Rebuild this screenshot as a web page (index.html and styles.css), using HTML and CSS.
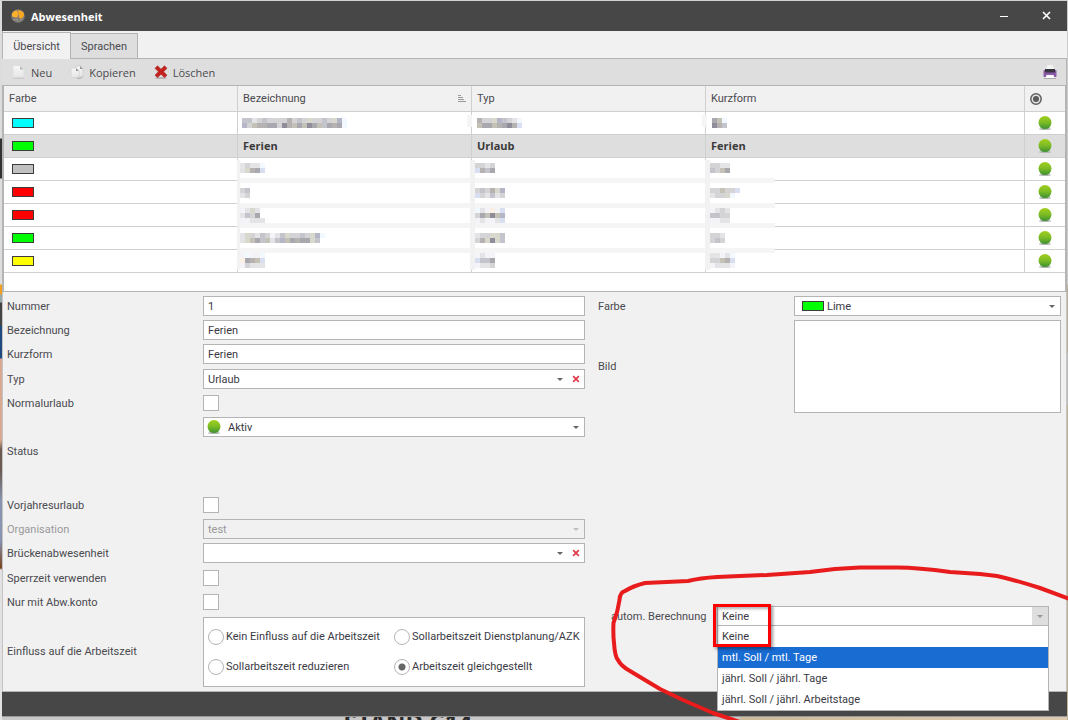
FILE: index.html
```html
<!DOCTYPE html>
<html lang="de">
<head>
  <meta charset="UTF-8">
  <meta name="viewport" content="width=device-width, initial-scale=1.0">
  <title>Abwesenheit</title>
  <link rel="stylesheet" href="styles.css">
</head>
<body>
  <div class="desktop-text">STAND C14</div>

  <!-- shared icons -->
  <svg class="defs" width="0" height="0" aria-hidden="true">
    <defs>
      <linearGradient id="green" x1="0" y1="0" x2="0" y2="1">
        <stop offset="0" stop-color="#a0cf1c"/>
        <stop offset="0.5" stop-color="#7cbb25"/>
        <stop offset="1" stop-color="#3c9033"/>
      </linearGradient>
      <linearGradient id="paper" x1="0" y1="0" x2="0" y2="1">
        <stop offset="0" stop-color="#f6f6f6"/>
        <stop offset="1" stop-color="#e6e6e6"/>
      </linearGradient>
      <symbol id="dot" viewBox="0 0 14 14">
        <ellipse cx="7" cy="13" rx="6" ry="1" fill="#b4b4b4"/>
        <circle cx="7" cy="6.6" r="6.5" fill="url(#green)"/>
      </symbol>
      <symbol id="clear" viewBox="0 0 7 7">
        <path d="M1 1l5 5M6 1L1 6" stroke="#e03a48" stroke-width="1.5"/>
      </symbol>
    </defs>
  </svg>

  <div class="window">
    <header class="titlebar">
      <svg class="logo" width="14" height="14" viewBox="0 0 14 14" aria-hidden="true">
        <circle cx="7" cy="7" r="6.8" fill="#7d7a76"/>
        <path d="M.8 4.500Q3 1.500 6 1.300L7 4.500 6.500 8.500 3.500 8.300 1.200 7.500Z" fill="#fdb12b"/>
        <path d="M7 1.300Q11 1 12.800 4L13 7 10.500 9.800 8 8.800 7.400 5Z" fill="#f5a623"/>
        <path d="M2.500 10.500h4l.5 2.500M9 10.500l2 .5" stroke="#9a9793" fill="none"/>
      </svg>
      <h1>Abwesenheit</h1>
      <button class="win-btn" type="button" aria-label="Minimieren">
        <svg width="8" height="9" viewBox="0 0 8 9"><path d="M0 5.5h8" stroke="#fff"/></svg>
      </button>
      <button class="win-btn" type="button" aria-label="Schließen">
        <svg width="9" height="9" viewBox="0 0 9 9"><path d="M1 1l7 7M8 1L1 8" stroke="#fff" stroke-width="1.6"/></svg>
      </button>
    </header>

    <nav class="tabs">
      <button class="tab active" type="button">Übersicht</button>
      <button class="tab" type="button">Sprachen</button>
    </nav>

    <div class="toolbar">
      <button class="tool" type="button">
        <svg width="14" height="14" viewBox="0 0 14 14">
          <ellipse cx="6.5" cy="13" rx="6" ry="1" fill="#c9c9c9"/>
          <path d="M1.500 1h6.500l3.500 3.500v8h-10z" fill="url(#paper)"/>
          <path d="M8 1v3.500h3.500z" fill="#b9b9b9"/>
        </svg>
        Neu
      </button>
      <button class="tool" type="button">
        <svg width="14" height="14" viewBox="0 0 14 14">
          <path d="M6 1h4l3 3v7.500H6z" fill="url(#paper)" stroke="#c4c4c4" stroke-width=".6"/>
          <path d="M10 1v3h3z" fill="#999"/>
          <path d="M1 3h5l3 3v6.500H1z" fill="url(#paper)" stroke="#cfcfcf" stroke-width=".6"/>
          <path d="M6 3v3h3z" fill="#999"/>
          <path d="M7 13.300h4l1.500-1.500" stroke="#aaa" fill="none"/>
        </svg>
        Kopieren
      </button>
      <button class="tool" type="button">
        <svg width="14" height="14" viewBox="0 0 14 14">
          <ellipse cx="7" cy="13" rx="6" ry="1" fill="#b5b5b5"/>
          <path d="M3.500 .8L7 4.200 10.500 .8 13 3.300 9.600 6.700 13 10.200 10.500 12.600 7 9.200 3.500 12.600 1 10.200 4.400 6.700 1 3.300Z" fill="#c3221f" stroke="#a31512" stroke-width=".5"/>
        </svg>
        Löschen
      </button>
      <button class="tool print" type="button" aria-label="Drucken">
        <svg width="14" height="14" viewBox="0 0 14 14">
          <path d="M4.500 0h5l1.500 4H3z" fill="#f3f3f3"/>
          <rect x=".5" y="5" width="13" height="7" rx="1" fill="#8a5ca8"/>
          <rect x="2" y="4" width="10" height="3.500" fill="#38333c"/>
          <path d="M3.500 10h7l1 3.200h-9z" fill="#fff"/>
          <path d="M1 13.500h12" stroke="#aaa"/>
        </svg>
      </button>
    </div>

    <div class="grid-wrap">
      <table class="grid">
        <colgroup><col class="c"><col class="c"><col class="c"><col><col class="c-state"></colgroup>
        <thead>
          <tr>
            <th>Farbe</th>
            <th>
              <div class="th-sort">Bezeichnung
                <svg width="8" height="8" viewBox="0 0 8 8"><path d="M0 .5h3M0 2.500h5M0 4.500h6M0 6.500h8" stroke="#999"/></svg>
              </div>
            </th>
            <th>Typ</th>
            <th>Kurzform</th>
            <th>
              <svg width="12" height="12" viewBox="0 0 12 12"><circle cx="6" cy="6" r="5.200" fill="#e4e4e4" stroke="#606060" stroke-width="1.500"/><circle cx="6" cy="6" r="3" fill="#5a5a5a"/></svg>
            </th>
          </tr>
        </thead>
        <tbody>
          <tr><td><i class="swatch aqua"></i></td><td></td><td></td><td></td><td class="state"><svg><use href="#dot"/></svg></td></tr>
          <tr class="selected"><td><i class="swatch lime"></i></td><td>Ferien</td><td>Urlaub</td><td>Ferien</td><td class="state"><svg><use href="#dot"/></svg></td></tr>
          <tr><td><i class="swatch silver"></i></td><td></td><td></td><td></td><td class="state"><svg><use href="#dot"/></svg></td></tr>
          <tr><td><i class="swatch red"></i></td><td></td><td></td><td></td><td class="state"><svg><use href="#dot"/></svg></td></tr>
          <tr><td><i class="swatch red"></i></td><td></td><td></td><td></td><td class="state"><svg><use href="#dot"/></svg></td></tr>
          <tr><td><i class="swatch lime"></i></td><td></td><td></td><td></td><td class="state"><svg><use href="#dot"/></svg></td></tr>
          <tr><td><i class="swatch yellow"></i></td><td></td><td></td><td></td><td class="state"><svg><use href="#dot"/></svg></td></tr>
        </tbody>
      </table>
      <!-- pixelated cell contents -->
      <svg class="mosaic" width="538" height="160" viewBox="237 112 538 160" shape-rendering="crispEdges" aria-hidden="true">
        <path d="M240 160h535v110H240z" fill="#fff"/>
        <path d="M237 178h538v5H237zM237 203h538v5H237zM237 223h538v5H237zM237 248h538v5H237zM467 115h5v12h-5zM702 115h5v12h-5z" fill="#f5f5f5"/>
        <path d="M237 160h3v110h-3zM470 160h5v110h-5zM705 160h5v110h-5z" fill="#f2f2f2"/>
      </svg>
    </div>

    <form class="form">
      <div class="col-left">
        <div class="section">
          <div class="row"><label for="nummer">Nummer</label><input id="nummer" class="box" type="text" value="1"></div>
          <div class="row"><label for="bez">Bezeichnung</label><input id="bez" class="box" type="text" value="Ferien"></div>
          <div class="row"><label for="kurz">Kurzform</label><input id="kurz" class="box" type="text" value="Ferien"></div>
        </div>
        <div class="section">
          <div class="row">
            <label for="typ">Typ</label>
            <div class="box combo">
              <select id="typ"><option>Urlaub</option></select><span class="arrow"></span>
              <button class="clear" type="button" aria-label="Typ leeren"><svg width="8" height="8"><use href="#clear"/></svg></button>
            </div>
          </div>
          <div class="row"><label for="normal">Normalurlaub</label><input id="normal" class="check" type="checkbox"></div>
          <div class="row status">
            <label for="status">Status</label>
            <div class="box combo">
              <svg class="dot"><use href="#dot"/></svg>
              <select id="status"><option>Aktiv</option></select><span class="arrow"></span>
            </div>
          </div>
          <div class="row"><label for="vorjahr">Vorjahresurlaub</label><input id="vorjahr" class="check" type="checkbox"></div>
          <div class="row disabled">
            <label for="org">Organisation</label>
            <div class="box combo"><select id="org" disabled><option>test</option></select><span class="arrow"></span></div>
          </div>
          <div class="row">
            <label for="bruecke">Brückenabwesenheit</label>
            <div class="box combo">
              <select id="bruecke"><option></option></select><span class="arrow"></span>
              <button class="clear" type="button" aria-label="Brückenabwesenheit leeren"><svg width="8" height="8"><use href="#clear"/></svg></button>
            </div>
          </div>
        </div>
        <div class="section">
          <div class="row"><label for="sperr">Sperrzeit verwenden</label><input id="sperr" class="check" type="checkbox"></div>
          <div class="row"><label for="konto">Nur mit Abw.konto</label><input id="konto" class="check" type="checkbox"></div>
          <div class="row influence">
            <span id="einfluss">Einfluss auf die Arbeitszeit</span>
            <div class="radios" role="radiogroup" aria-labelledby="einfluss">
              <label><input type="radio" name="einfluss">Kein Einfluss auf die Arbeitszeit</label>
              <label><input type="radio" name="einfluss">Sollarbeitszeit Dienstplanung/AZK reduzieren</label>
              <label><input type="radio" name="einfluss">Sollarbeitszeit reduzieren</label>
              <label><input type="radio" name="einfluss" checked>Arbeitszeit gleichgestellt</label>
            </div>
          </div>
        </div>
      </div>

      <div class="col-right">
        <div class="row">
          <label for="farbe">Farbe</label>
          <div class="box combo">
            <i class="swatch lime"></i>
            <select id="farbe"><option>Lime</option></select><span class="arrow"></span>
          </div>
        </div>
        <div class="row picture"><span>Bild</span><div class="image-box"></div></div>
        <div class="row calc">
          <label for="calc">autom. Berechnung</label>
          <div class="box combo open">
            <select id="calc"><option>Keine</option></select><span class="arrow"></span>
            <ul class="dropdown" role="listbox" aria-label="autom. Berechnung">
              <li role="option">Keine</li>
              <li role="option" class="hover" aria-selected="true">mtl. Soll / mtl. Tage</li>
              <li role="option">jährl. Soll / jährl. Tage</li>
              <li role="option">jährl. Soll / jährl. Arbeitstage</li>
            </ul>
            <div class="mark"></div>
          </div>
        </div>
      </div>
    </form>

    <footer class="statusbar"></footer>
  </div>

  <!-- hand-drawn circle -->
  <svg class="scribble" width="460" height="160" viewBox="608 560 460 160" aria-hidden="true">
    <path d="M1070 599L1040 588Q1015 580 997 576L980 574L950 572Q915 567 893 567.500L860 567.500L835 569L810 572L767 575L740 576L717 577Q700 578 688 581L645 583Q633 586 625 591Q620 592 619.500 600Q618 611 613.500 623Q613 635 614 643Q615 657 618 660Q621 666 630 671L660 689L683 700L713 713L740 722" fill="none" stroke="#e81c1c" stroke-width="4" stroke-linejoin="round"/>
  </svg>

  <script src="mosaic.js"></script>
</body>
</html>
```
FILE: mosaic.js
```js
// colours of the 5px blocks
const palette = {
  a: '#908c9a', b: '#a8a8ae', c: '#b6b2b2', d: '#c4c4cc', e: '#d4d4d6',
  f: '#e4e4e6', g: '#f4f4f8', t: '#c4c2b6', u: '#d8d8cc', v: '#b4b6c8',
  w: '#f2f8ff', x: '#d8dff0', y: '#fbf0e4'
};

// [x, y, lines of blocks]
const blocks = [
  [242, 118, ['ddfedeeeecedeueedeuvw', 'vetccbbeactbtabtdbcbw']],
  [477, 118, ['ceeuvdefw', 'tbbtcbacx']],
  [712, 118, ['btw', 'acd']],
  [240, 163, ['feffw', 'fucbx']],
  [475, 163, ['eefe', 'xcdb']],
  [710, 163, ['eeff', 'detb']],
  [240, 188, ['ed', 'fe']],
  [475, 188, ['edecuv', 'xefdfe']],
  [710, 188, ['eeteex', 'feeuw']],
  [240, 208, ['gfuf', 'fdeb', 'ggfff']],
  [475, 208, ['wfgygx', 'ebtatv', 'gfggfx']],
  [710, 208, ['gfef', 'ddee', 'ggff']],
  [240, 233, ['fuefdegfdueedeuvw', 'futbdtfdvtbcbbud']],
  [475, 233, ['feeuud', 'ecuaud']],
  [710, 233, ['eef', 'ede']],
  [240, 253, ['gwggw', 'ybctx', 'gefff']],
  [475, 253, ['gfgg', 'xddb', 'gffe']],
  [710, 253, ['ffgfw', 'eetcx', 'gfffg']]
];

const svg = document.querySelector('.mosaic');
blocks.forEach(([x, y, lines]) => {
  lines.forEach((line, row) => {
    [...line].forEach((key, i) => {
      const rect = document.createElementNS('http://www.w3.org/2000/svg', 'rect');
      rect.setAttribute('x', x + i * 5);
      rect.setAttribute('y', y + row * 5);
      rect.setAttribute('width', 5);
      rect.setAttribute('height', 5);
      rect.setAttribute('fill', palette[key]);
      svg.appendChild(rect);
    });
  });
});
```
FILE: styles.css
```css
* {
  box-sizing: border-box;
}

body {
  margin: 0;
  height: 100vh;
  padding: 1px 1px 3px 2px;
  overflow: hidden;
  position: relative;
  font-family: Roboto, sans-serif;
  font-size: 11px;
  color: #4a4a4f;
  background:
    linear-gradient(#cfd2cf, #cfd2cf) top / 100% 1px no-repeat,
    linear-gradient(#dcdcdc 138px, #333 139px 178px, #ddd 179px 284px, #f0a020 285px 294px, #9aa 295px 302px, #444 303px 325px, #1e4a80 326px 358px, #d8a890 359px 440px, #6b5a50 450px 470px, #8894b0 500px 540px, #7a4420 568px, #e2e2e2 570px) left / 2px 100% no-repeat,
    linear-gradient(#ccc 284px, #b8b09a 285px 352px, #bbb 353px 404px, #c0b498 405px) right / 1px 100% no-repeat,
    linear-gradient(90deg, #c9c7c8 738px, #cdbb9c 742px, #dccbb0) bottom / 100% 3px no-repeat;
}

button,
input,
select {
  font: inherit;
  color: inherit;
}

button {
  border: 0;
  padding: 0;
  background: none;
}

.defs {
  position: absolute;
}

.desktop-text {
  position: absolute;
  left: 344px;
  top: 706px;
  font: bold 24px/32px "Noto Sans", sans-serif;
  color: #2b2b2b;
}

.window {
  position: relative;
  display: flex;
  flex-direction: column;
  height: 100%;
  background: #f1f1f1;
}

/* title bar */
.titlebar {
  display: flex;
  align-items: center;
  height: 30px;
  padding-left: 9px;
  background: #474747;
  color: #fff;
}

.titlebar h1 {
  flex: 1;
  margin: 0 0 0 6px;
  font: bold 11px "Open Sans", sans-serif;
}

.win-btn {
  width: 42px;
  height: 30px;
}

/* tabs */
.tabs {
  display: flex;
  align-items: flex-end;
  height: 28px;
  border-left: 1px solid #b4b4b4;
  border-bottom: 1px solid #b4b4b4;
}

.tab {
  height: 25px;
  width: 67px;
  border: 1px solid #b4b4b4;
  border-bottom: 0;
  border-left: 0;
  background: #dedede;
}

.tab.active {
  width: 68px;
  height: 27px;
  margin-bottom: -1px;
  background: #f1f1f1;
}

/* toolbar */
.toolbar {
  display: flex;
  align-items: center;
  gap: 18px;
  height: 26px;
  padding: 0 9px 0 10px;
  background: #dedede;
  border-right: 1px solid #b4b4b4;
  font-family: "Open Sans", sans-serif;
}

.tool {
  display: flex;
  align-items: center;
  gap: 5px;
}

.tool.print {
  margin-left: auto;
}

/* table */
.grid-wrap {
  position: relative;
  height: 207px;
  border: 1px solid #b4b4b4;
  border-left-width: 2px;
  border-right-width: 2px;
  background: #fff;
}

.grid {
  width: 100%;
  table-layout: fixed;
  border-collapse: separate;
  border-spacing: 0;
}

.grid .c {
  width: 234px;
}

.grid .c-state {
  width: 40px;
}

.grid th,
.grid td {
  height: 23px;
  padding: 0 5px;
  border-right: 1px solid #d0d0d0;
  border-bottom: 1px solid #d0d0d0;
  text-align: left;
  font-weight: normal;
  line-height: 14px;
}

.grid th {
  height: 26px;
  background: #f1f1f1;
}

.grid th:last-child,
.grid td:last-child {
  border-right: 0;
}

.grid th svg {
  display: block;
}

.th-sort {
  display: flex;
  align-items: center;
  justify-content: space-between;
}

.grid td .swatch {
  margin-left: 3px;
}

.grid .state {
  padding: 0;
}

.grid .state svg {
  display: block;
  width: 14px;
  height: 14px;
  margin: 0 auto;
}

.grid .selected td {
  background: #dedede;
  font-family: "Open Sans", sans-serif;
  font-weight: bold;
  color: #3a3a3a;
}

.swatch {
  display: block;
  flex: none;
  width: 22px;
  height: 10px;
  border: 1px solid #3c3c3c;
}

.aqua { background: #00ffff; }
.lime { background: #00ff00; }
.silver { background: #c0c0c0; }
.red { background: #ff0000; }
.yellow { background: #ffff00; }

.mosaic {
  position: absolute;
  left: 233px;
  top: 26px;
}

/* form */
.form {
  flex: 1;
  display: grid;
  grid-template-columns: 578fr 463fr;
  column-gap: 13px;
  padding: 2px 5px 0 4px;
  border-left: 1px solid #c4c4c4;
  border-right: 1px solid #c4c4c4;
}

.col-left {
  display: flex;
  flex-direction: column;
  gap: 1px;
  min-width: 0;
}

.col-right {
  display: flex;
  flex-direction: column;
  min-width: 0;
}

.row {
  display: grid;
  grid-template-columns: 196px minmax(0, 1fr);
  align-items: center;
  min-height: 24px;
}

.box {
  width: 100%;
  height: 20px;
  padding: 0 4px;
  border: 1px solid #b4b4b4;
  background: #fff;
  color: #3a3a44;
}

.combo {
  position: relative;
  display: flex;
  align-items: center;
  padding-right: 0;
}

.combo select {
  flex: 1;
  min-width: 0;
  height: 18px;
  padding: 0;
  border: 0;
  appearance: none;
  background: none;
}

.combo .swatch {
  margin: 0 3px;
}

.combo .dot {
  width: 14px;
  height: 14px;
  margin-right: 7px;
}

.arrow {
  display: flex;
  justify-content: center;
  align-items: center;
  width: 16px;
  height: 18px;
  pointer-events: none;
}

.arrow::after {
  content: "";
  border: 3px solid transparent;
  border-top-color: #666;
  border-bottom: 0;
}

.clear {
  display: flex;
  justify-content: center;
  align-items: center;
  width: 16px;
  height: 18px;
}

.check {
  appearance: none;
  width: 16px;
  height: 16px;
  margin: 0;
  border: 1px solid #b4b4b4;
  background: #fff;
}

.row.status {
  min-height: 72px;
  margin-bottom: 6px;
}

.row.status .combo {
  align-self: start;
  margin-top: 2px;
  padding-left: 3px;
}

.disabled {
  color: #999;
}

.disabled .box {
  background: #f1f1f1;
  color: #999;
}

.disabled select {
  opacity: 1;
}

.disabled .arrow::after {
  border-top-color: #c0c0c0;
}

.row.influence {
  min-height: 75px;
}

.radios {
  display: grid;
  grid-template-columns: 1fr 1fr;
  grid-auto-rows: 30px;
  padding: 4px;
  border: 1px solid #b4b4b4;
  background: #fff;
  color: #3a3a44;
}

.radios label {
  display: flex;
  align-items: center;
  gap: 2px;
  min-width: 0;
  overflow: hidden;
  white-space: nowrap;
}

.radios input {
  appearance: none;
  flex: none;
  width: 16px;
  height: 16px;
  margin: 0;
  border: 1px solid #b4b4b4;
  border-radius: 50%;
}

.radios input:checked {
  background: radial-gradient(circle, #666 3px, #fff 4px);
}

.row.picture .image-box {
  height: 93px;
  border: 1px solid #b4b4b4;
  background: #fff;
}

.row.picture {
  padding: 2px 0;
}

.row.calc {
  grid-template-columns: 106px minmax(0, 1fr);
  margin: auto 12px 63px 13px;
}

.open .arrow {
  background: #dedede;
}

.open .arrow::after {
  border-top-color: #999;
}

.dropdown {
  position: absolute;
  left: -1px;
  right: -1px;
  top: 18px;
  z-index: 1;
  margin: 0;
  padding: 0;
  list-style: none;
  border: 1px solid #b4b4b4;
  background: #fff;
}

.dropdown li {
  padding: 0 4px;
  line-height: 21px;
}

.dropdown .hover {
  background: #196cd2;
  color: #fff;
}

/* red frame over the field and its first option */
.mark {
  position: absolute;
  left: -5px;
  top: -3px;
  z-index: 2;
  width: 58px;
  height: 43px;
  border: 3px solid #f00;
  box-shadow: 2px 2px 3px rgba(0, 0, 0, 0.4), inset 2px 2px 3px rgba(0, 0, 0, 0.3);
}

.statusbar {
  height: 26px;
  border-top: 1px solid #b4b4b4;
  border-bottom: 1px solid #999;
  background: #474747;
}

.scribble {
  position: absolute;
  right: 0;
  bottom: 0;
}
```
